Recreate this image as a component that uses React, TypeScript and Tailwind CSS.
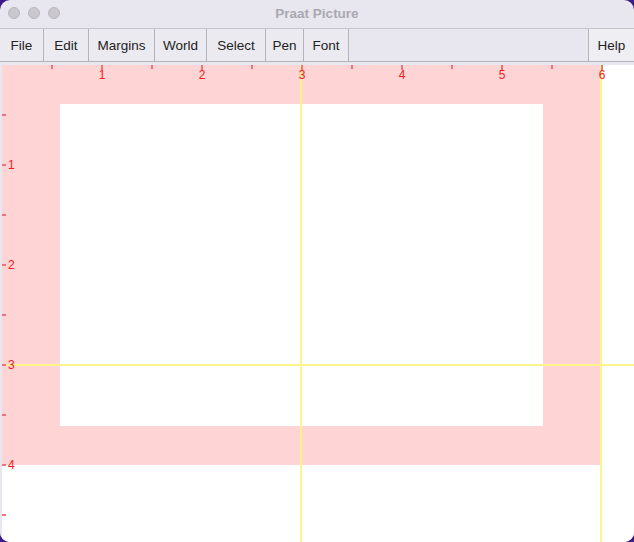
const menus = [
  { label: 'File', w: 44 },
  { label: 'Edit', w: 45 },
  { label: 'Margins', w: 66 },
  { label: 'World', w: 52 },
  { label: 'Select', w: 59 },
  { label: 'Pen', w: 38 },
  { label: 'Font', w: 45 },
];

// picture canvas: 100px per inch, origin at svg x = -1
const PictureCanvas = () => {
  const xs = [0, 1, 2, 3, 4, 5, 6];
  const ys = [1, 2, 3, 4, 5, 6, 7, 8, 9];
  return (
    <svg width="632" height="477" className="block bg-white">
      <rect x="0" y="0" width="600" height="400" fill="#ffd4d4" />
      <rect x="58" y="39" width="483" height="322" fill="#ffffff" />
      <rect x="298" y="0" width="2" height="477" fill="#fff38e" />
      <rect x="598" y="0" width="2" height="477" fill="#fff38e" />
      <rect x="0" y="299" width="632" height="2" fill="#fff38e" />
      {xs.map((i) => (
        <g key={`t${i}`}>
          <rect x={49 + i * 100} y="0" width="2" height="4" fill="#e8747c" />
          {i < 6 && <rect x={99 + i * 100} y="0" width="2" height="5" fill="#e8747c" />}
          {i < 6 && (
            <text x={100 + i * 100} y="14" textAnchor="middle" fontSize="12" fill="#f01a1a" fontFamily="'Liberation Sans', Arial, sans-serif">
              {i + 1}
            </text>
          )}
        </g>
      ))}
      {ys.map((j) => (
        <g key={`l${j}`}>
          <rect x="0" y={j * 50 - 1} width="4" height="2" fill="#e8747c" />
          {j % 2 === 0 && (
            <text x="6" y={j * 50 + 4} fontSize="12" fill="#f01a1a" fontFamily="'Liberation Sans', Arial, sans-serif">
              {j / 2}
            </text>
          )}
        </g>
      ))}
    </svg>
  );
};

export default function App() {
  return (
    <div className="w-[634px] h-[542px] bg-[#3b1a8a] overflow-hidden" style={{ fontFamily: "'Liberation Sans', Arial, sans-serif" }}>
      <div className="w-full h-full rounded-[10px] overflow-hidden bg-[#e8e6ef] flex flex-col">
        {/* title bar */}
        <div className="h-[29px] relative flex items-center justify-center border-b border-[#c6c4cc] shrink-0">
          <div className="absolute left-[8px] top-[7px] flex gap-[8px]">
            <span className="w-[12px] h-[12px] rounded-full bg-[#cac8ce] border border-[#b8b6bd]" />
            <span className="w-[12px] h-[12px] rounded-full bg-[#cac8ce] border border-[#b8b6bd]" />
            <span className="w-[12px] h-[12px] rounded-full bg-[#cac8ce] border border-[#b8b6bd]" />
          </div>
          <span className="text-[13.5px] font-bold text-[#aaa9b0]">Praat Picture</span>
        </div>
        {/* menu bar */}
        <div className="h-[33px] flex items-stretch border-b border-[#b4b3b9] shrink-0">
          {menus.map((m) => (
            <div
              key={m.label}
              className="flex items-center justify-center pt-[2px] border-r border-[#b4b3b9] bg-[#ebeaf0] text-[13.5px] text-[#222]"
              style={{ width: m.w }}
            >
              {m.label}
            </div>
          ))}
          <div className="flex-1" />
          <div className="w-[46px] flex items-center justify-center pt-[2px] border-l border-[#b4b3b9] bg-[#efeef2] text-[13.5px] text-[#222]">
            Help
          </div>
        </div>
        {/* canvas */}
        <div className="flex-1 pt-[3px] pl-[2px] bg-[#e8e6ef]">
          <PictureCanvas />
        </div>
      </div>
    </div>
  );
}
